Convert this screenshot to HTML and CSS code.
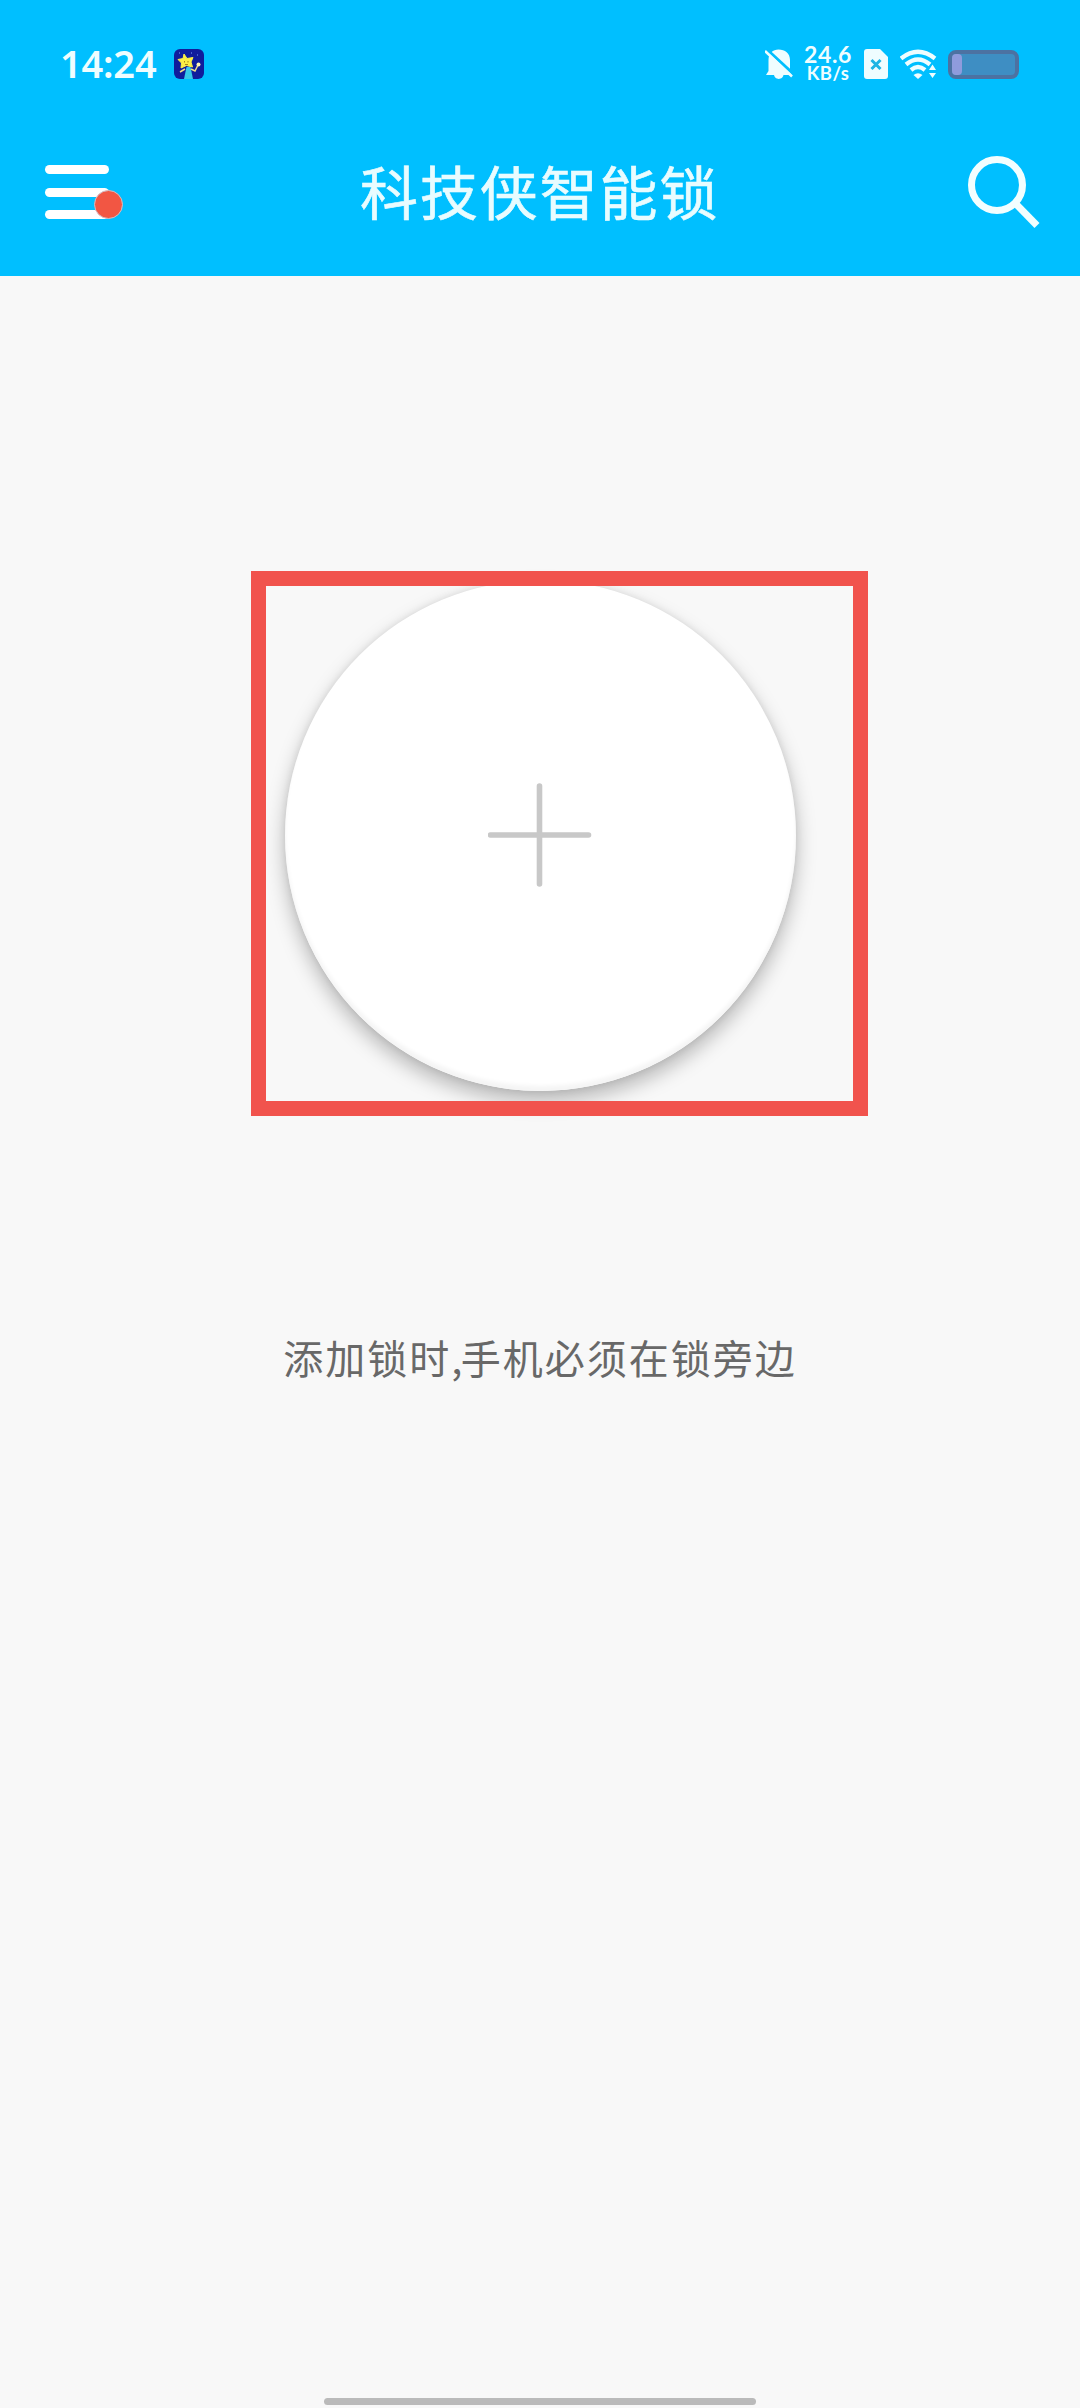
FILE: index.html
```
<!DOCTYPE html>
<html lang="zh-CN">
<head>
<meta charset="utf-8">
<title>科技侠智能锁</title>
<link rel="stylesheet" href="styles.css">
</head>
<body>
<div class="screen">
  <header class="header">
    <div class="status">
      <span class="time">14:24</span>
      <svg class="app" width="30" height="30" viewBox="0 0 30 30">
        <rect width="30" height="30" rx="6" fill="#101c9c"/>
        <path d="M10 30L12.500 18L16.500 18L19 30Z" fill="#38c8ea"/>
        <path d="M11 20L6 23M17 20L21 22L24 16" stroke="#f0dc8a" stroke-width="1.500" fill="none"/>
        <path d="M10 5L13 9.500L19 8.500L17 13L18.500 18L12.500 16.500L7 19L7.500 14L4 10.500L9 9.500Z" fill="#fbee45" stroke="#fbee45" stroke-width="1" stroke-linejoin="round"/>
        <path d="M10.500 12v1.500M14 12v1.500M11 15.500h3" stroke="#a58518" stroke-width="1"/>
        <circle cx="24.500" cy="15.500" r="2" fill="#fff3b0"/>
        <path d="M17 4h1M23 6h1M5 4h1" stroke="#7ea0ff"/>
      </svg>
      <svg class="bell" width="28" height="32" viewBox="0 0 28 32">
        <path d="M13.500 1.500C20 1.500 25 5.500 25 12V24L27 27H1L3.500 23V12C3.500 5.500 8 1.500 13.500 1.500Z" fill="#effdff"/>
        <path d="M9 26H18.500C18.500 32.500 9 32.500 9 26Z" fill="#effdff"/>
        <path d="M2 1.500L30 27.500" stroke="#00bfff" stroke-width="3"/>
        <path d="M0 3L27 28.500" stroke="#effdff" stroke-width="2.500"/>
      </svg>
      <div class="speed"><span class="rate">24.6</span><span class="unit">KB/s</span></div>
      <svg class="sim" width="24" height="30" viewBox="0 0 24 30">
        <path d="M3 0H16L24 8V27Q24 30 21 30H3Q0 30 0 27V3Q0 0 3 0Z" fill="#effdff"/>
        <path d="M7.500 11L16.500 20M16.500 11L7.500 20" stroke="#1eb4e4" stroke-width="3"/>
      </svg>
      <svg class="wifi" width="37" height="30" viewBox="0 0 37 30">
        <g fill="none" stroke="#effdff" stroke-width="4.300">
          <path d="M1 9.500Q18 -4 35 9.500"/><path d="M6 15.500Q18 5.500 30 15.500"/><path d="M11 21Q18 15 25 21"/>
        </g>
        <path d="M13.500 26Q18 22.500 22.500 26L18 30Z" fill="#effdff"/>
        <path d="M28 21L32.500 14L37 21V24L32.500 30L28 24Z" fill="#00bfff"/>
        <path d="M29 21L32.500 15.500L36 21ZM29 24L32.500 29L36 24Z" fill="#effdff"/>
      </svg>
      <div class="battery"><i></i></div>
    </div>
    <div class="bar">
      <div class="menu"><i></i><i></i><i></i><b></b></div>
      <h1>科技侠智能锁</h1>
      <svg class="search" width="72" height="73" viewBox="0 0 72 73" fill="none" stroke="#f2feff">
        <circle cx="29" cy="29" r="25.500" stroke-width="7"/>
        <path d="M47 47L69 69.500" stroke-width="7"/>
      </svg>
    </div>
  </header>
  <main>
    <div class="add">
      <svg width="104" height="106" viewBox="0 0 104 106" stroke="#c8c8c8" stroke-width="5.600" stroke-linecap="round">
        <path d="M2.500 52H100.500M51.500 3V101"/>
      </svg>
      <div class="frame"></div>
    </div>
    <p>添加锁时<span>,</span>手机必须在锁旁边</p>
  </main>
  <div class="home"></div>
</div>
</body>
</html>
```
FILE: styles.css
```
* { box-sizing: border-box; }
body { margin: 0; background: #f8f8f8; font-family: "Noto Sans CJK SC", sans-serif; }
.screen { width: 1080px; height: 2408px; display: flex; flex-direction: column; align-items: center; overflow: hidden; }
.header { width: 100%; height: 276px; background: #00bfff; flex: none; }
.status { height: 128px; padding: 0 61px 0 60px; display: flex; align-items: center; }
svg { display: block; flex: none; }
.time { width: 114px; padding-bottom: 2px; font: 600 38px/40px "Noto Sans", sans-serif; letter-spacing: -.2px; color: #effdff; }
.bell { margin-left: auto; }
.speed { width: 48px; margin: 0 12px 0 11px; display: flex; flex-direction: column; align-items: center; color: #effdff; font-family: Lato, sans-serif; font-weight: 700; white-space: nowrap; }
.rate { font-size: 23px; line-height: 19px; letter-spacing: .6px; }
.unit { font-size: 18.5px; line-height: 19px; letter-spacing: .4px; }
.sim { margin-right: 12px; }
.wifi { margin-right: 11px; }
.battery { width: 71px; height: 29px; border: 4px solid #4c72a2; border-radius: 8px; background: #3e8ec3; }
.battery i { display: block; width: 10px; height: 21px; border-radius: 4px; background: #8f9bdc; }
.bar { height: 148px; padding: 0 40px 0 45px; display: flex; align-items: flex-start; }
.menu { width: 78px; margin-top: 37px; display: flex; flex-direction: column; gap: 13.5px; position: relative; }
.menu i { width: 64px; height: 9px; border-radius: 5px; background: #fff; }
.menu b { position: absolute; left: 49px; top: 25px; width: 29px; height: 29px; border-radius: 50%; background: #f25643; border: 1px solid #d4bfc8; }
h1 { margin: 20px 0 0 237px; font-size: 58px; line-height: 84px; font-weight: 400; letter-spacing: 1.9px; color: #e8fcff; -webkit-text-stroke: .6px #e8fcff; white-space: nowrap; }
.search { margin: 28px 0 0 auto; }
main { display: flex; flex-direction: column; align-items: center; padding-top: 304px; }
.add { width: 511px; height: 511px; border-radius: 50%; background: #fff; display: flex; align-items: center; justify-content: center; position: relative; box-shadow: 0 10px 20px rgba(0,0,0,.27), 0 0 7px rgba(0,0,0,.08), inset 0 -5px 4px #f5f5f5; }
.frame { position: absolute; left: -34px; top: -9px; width: 617.5px; height: 545px; border: 15px solid #f1534d; }
p { margin: 236px 0 0; font-size: 40px; line-height: 60px; letter-spacing: 2px; color: #686868; white-space: nowrap; }
p span { letter-spacing: -1.6px; }
.home { width: 432px; height: 7px; border-radius: 4px; background: #bababa; margin-top: auto; margin-bottom: 3px; }
```
